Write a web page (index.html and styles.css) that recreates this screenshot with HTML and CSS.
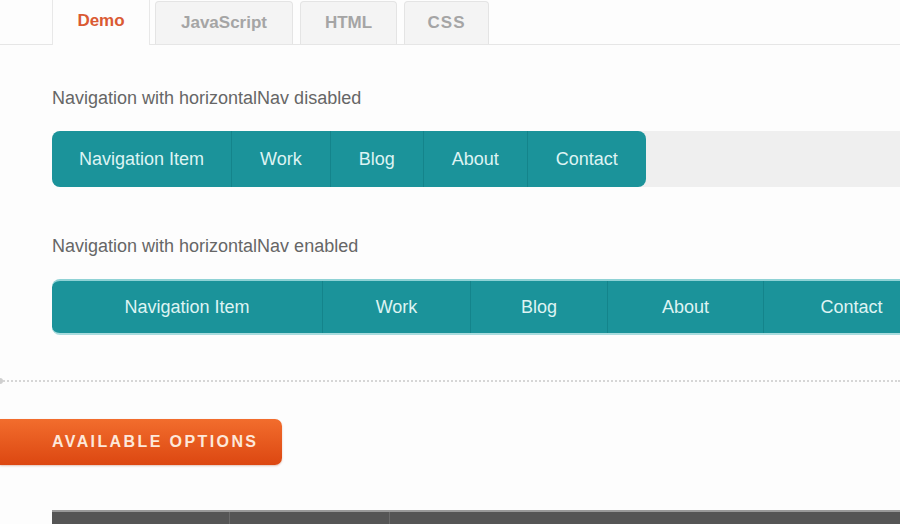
FILE: index.html
```html
<!DOCTYPE html>
<html lang="en">
<head>
  <meta charset="UTF-8">
  <title>horizontalNav – Demo</title>
  <link rel="stylesheet" href="styles.css">
</head>
<body>

  <div class="tabs">
    <a class="tab active">Demo</a>
    <a class="tab js">JavaScript</a>
    <a class="tab html">HTML</a>
    <a class="tab css">CSS</a>
  </div>

  <div class="demo">
    <p class="label">Navigation with horizontalNav disabled</p>
    <div class="nav-wrap">
      <ul class="nav">
        <li>Navigation Item</li>
        <li>Work</li>
        <li>Blog</li>
        <li>About</li>
        <li>Contact</li>
      </ul>
    </div>

    <p class="label second">Navigation with horizontalNav enabled</p>
    <ul class="nav full">
      <li>Navigation Item</li>
      <li>Work</li>
      <li>Blog</li>
      <li>About</li>
      <li>Contact</li>
    </ul>
  </div>

  <div class="divider"></div>

  <h2 class="options">AVAILABLE OPTIONS</h2>

  <table class="opts">
    <thead>
      <tr><th class="c1"></th><th class="c2"></th><th></th></tr>
    </thead>
  </table>

</body>
</html>
```

FILE: styles.css
```css
body {
  margin: 0;
  background: #fdfdfd;
  font-family: "Liberation Sans", Arial, sans-serif;
  overflow: hidden;
}

/* tabs */
.tabs {
  display: flex;
  align-items: flex-end;
  height: 44px;
  padding-left: 52px;
  border-bottom: 1px solid #e6e6e6;
}
.tab {
  display: block;
  box-sizing: border-box;
  height: 43px;
  line-height: 42px;
  margin-right: 6px;
  text-align: center;
  font-size: 17px;
  font-weight: bold;
  color: #a5a5a5;
  background: #f4f4f4;
  border: 1px solid #e4e4e4;
  border-bottom: none;
  border-radius: 4px 4px 0 0;
}
.tab.active {
  width: 98px;
  height: 45px;
  margin-bottom: -1px;
  margin-right: 5px;
  color: #da5a33;
  background: #fdfdfd;
  border-color: #e8e8e8;
  border-top: none;
  border-radius: 0;
}
.tab.js { width: 138px; margin-right: 7px; }
.tab.html { width: 97px; margin-right: 7px; }
.tab.css { width: 85px; letter-spacing: 1px; }

/* demo navs */
.demo {
  padding-left: 52px;
}
.label {
  margin: 43px 0 23px;
  font-size: 18px;
  line-height: 20px;
  color: #666;
}
.label.second {
  margin-top: 49px;
}
.nav-wrap {
  background: #efefef;
  border-radius: 8px 0 0 8px;
}
.nav {
  display: inline-flex;
  margin: 0;
  padding: 0;
  list-style: none;
  background: #1b939a;
  border-radius: 8px;
  overflow: hidden;
  vertical-align: top;
}
.nav li {
  height: 56px;
  line-height: 56px;
  padding: 0 28px;
  font-size: 18px;
  color: #def3f3;
  border-left: 1px solid #14848b;
}
.nav li:first-child {
  padding: 0 27px;
  border-left: none;
}
.nav.full {
  display: grid;
  grid-template-columns: 270fr 148fr 137fr 156fr 176fr;
  width: 887px;
  box-sizing: border-box;
  border-top: 2px solid #8fd2d5;
  border-bottom: 2px solid #a9dcde;
}
.nav.full li {
  height: 52px;
  line-height: 52px;
  padding: 0;
  text-align: center;
}

/* divider */
.divider {
  position: relative;
  margin-top: 45px;
  border-top: 2px dotted #d6d6d6;
}
.divider::before {
  content: "";
  position: absolute;
  left: -3px;
  top: -4px;
  width: 6px;
  height: 6px;
  border-radius: 50%;
  background: #cfcfcf;
}

/* options */
.options {
  width: 282px;
  box-sizing: border-box;
  height: 46px;
  margin: 37px 0 0;
  padding-left: 52px;
  line-height: 46px;
  font-size: 16px;
  letter-spacing: 2.4px;
  color: #fde8da;
  background: linear-gradient(#f26d2d, #dc4711);
  border-radius: 0 7px 7px 0;
  box-shadow: 0 1px 2px rgba(160, 60, 20, 0.3);
}
.opts {
  margin: 45px 0 0 52px;
  width: 848px;
  border-collapse: collapse;
}
.opts th {
  height: 40px;
  background: #555;
  border-top: 2px solid #999;
  border-left: 1px solid #6a6a6a;
}
.opts th.c1 { width: 175px; border-left: none; }
.opts th.c2 { width: 157px; }
```
